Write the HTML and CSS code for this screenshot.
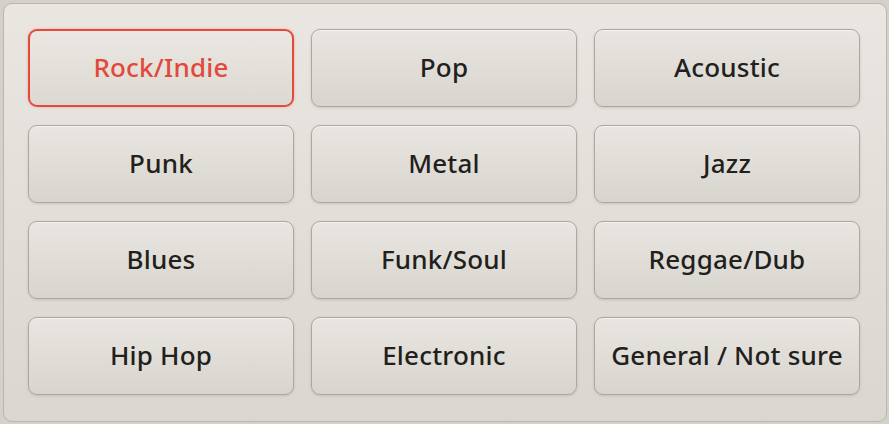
FILE: index.html
```html
<!DOCTYPE html>
<html>

<head>
    <title>Genre Picker</title>
    <link rel="stylesheet" href="styles.css">
</head>

<body>
    <div class="panel">
        <div class="genre-grid">
            <button class="genre-button selected">Rock/Indie</button>
            <button class="genre-button">Pop</button>
            <button class="genre-button">Acoustic</button>
            <button class="genre-button">Punk</button>
            <button class="genre-button">Metal</button>
            <button class="genre-button">Jazz</button>
            <button class="genre-button">Blues</button>
            <button class="genre-button">Funk/Soul</button>
            <button class="genre-button">Reggae/Dub</button>
            <button class="genre-button">Hip Hop</button>
            <button class="genre-button">Electronic</button>
            <button class="genre-button">General / Not sure</button>
        </div>
    </div>
</body>

</html>
```

FILE: styles.css
```css
body {
    margin: 0;
    background-color: #d4d1cb;
    font-family: 'Noto Sans', 'Open Sans', sans-serif;
}

.panel {
    margin: 3px 0 0 3px;
    width: 882px;
    height: 417px;
    border: 1px solid #bab6b0;
    border-radius: 9px;
    background: linear-gradient(#eae7e2, #dad7d1);
    box-sizing: content-box;
}

.genre-grid {
    display: grid;
    grid-template-columns: repeat(3, 266px);
    grid-template-rows: repeat(4, 78px);
    column-gap: 17px;
    row-gap: 18px;
    padding: 25px 0 0 24px;
}

.genre-button {
    font-family: inherit;
    font-size: 26px;
    font-weight: 500;
    letter-spacing: 0.2px;
    color: #221f1c;
    border: 1px solid #aba7a1;
    border-radius: 9px;
    background: linear-gradient(#e9e6e1, #d8d5cf);
    box-shadow: 0 1px 3px rgba(0, 0, 0, 0.12), inset 0 1px 0 rgba(255, 255, 255, 0.5);
    cursor: pointer;
    padding: 0 0 2px;
}

.genre-button.selected {
    color: #e2493a;
    border: 2px solid #e5493a;
    background: linear-gradient(#ebe8e3, #dcd9d3);
    box-shadow: 0 0 3px rgba(229, 73, 58, 0.35);
}
```
